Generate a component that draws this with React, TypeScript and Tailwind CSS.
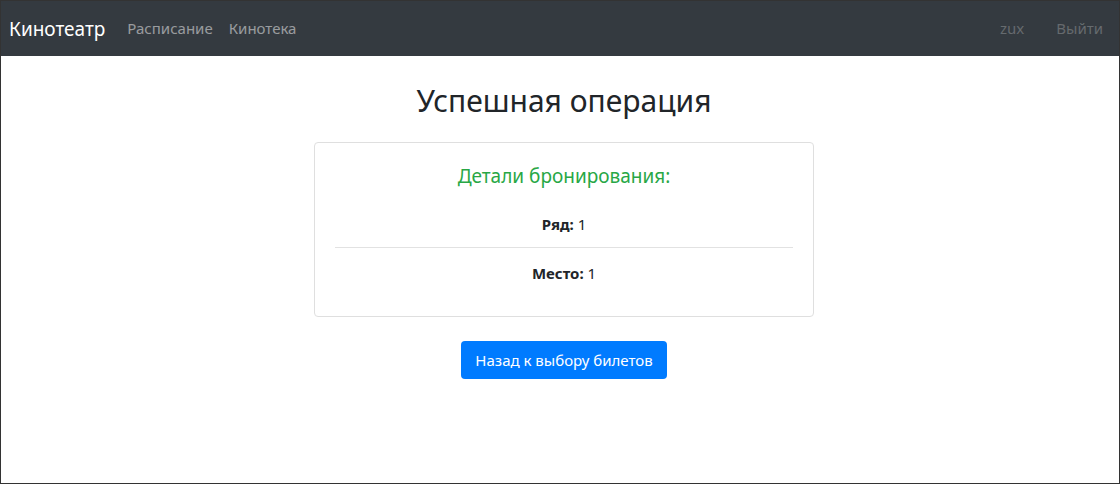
import React from 'react';

const font = { fontFamily: '"Noto Sans", "Open Sans", sans-serif' };

const NavBar: React.FC = () => (
  <nav className="flex h-[55px] items-center bg-[#343a40] pl-2 pr-2">
    <a className="mr-[14px] text-[19px] leading-[30px] text-white">Кинотеатр</a>
    <div className="flex">
      <a className="px-2 text-[15px] text-white/50">Расписание</a>
      <a className="px-2 text-[15px] text-white/50">Кинотека</a>
    </div>
    <div className="ml-auto flex gap-4">
      <a className="px-2 text-[15px] text-white/25">zux</a>
      <a className="px-2 text-[15px] text-white/25">Выйти</a>
    </div>
  </nav>
);

const App: React.FC = () => {
  return (
    <div style={font} className="h-[484px] overflow-hidden border border-[#333] bg-white text-[#212529]">
      <NavBar />
      <main className="flex flex-col items-center pl-[8px]">
        <h1 className="mt-[26px] text-[30px] leading-[38px]">Успешная операция</h1>
        <div className="mt-[22px] w-[500px] rounded border border-[#dfdfdf] px-5 pt-[21px] pb-[31px] text-center">
          <h5 className="text-[19px] leading-[24px] text-[#28a745]">Детали бронирования:</h5>
          <p className="mt-[24px] text-[15px] leading-[24px]">
            <b>Ряд:</b> 1
          </p>
          <hr className="mt-[11px] border-[#e2e2e2]" />
          <p className="mt-[13px] text-[15px] leading-[24px]">
            <b>Место:</b> 1
          </p>
        </div>
        <button className="mt-[24px] h-[38px] rounded bg-[#007bff] px-[14px] text-[15px] text-white">
          Назад к выбору билетов
        </button>
      </main>
    </div>
  );
};

export default App;
